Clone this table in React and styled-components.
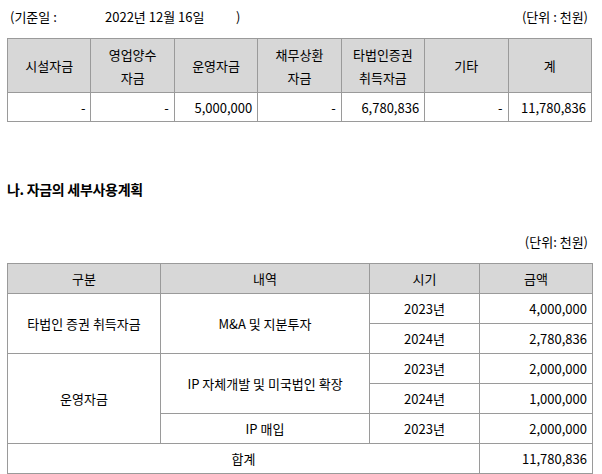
import React from "react"
import styled, { createGlobalStyle } from "styled-components"

const GlobalStyle = createGlobalStyle`
  body {
    margin: 0;
    background: #fff;
    color: #000;
    font-family: "Noto Sans CJK KR", "Noto Sans", sans-serif;
    font-size: 13px;
  }
`

const Page = styled.div`
  width: 585px;
  margin-left: 7px;
  padding-top: 7px;
`

const InfoLine = styled.div`
  display: flex;
  align-items: center;
  height: 20px;
  line-height: 20px;
  margin-bottom: ${props => props.gap || 11}px;
  margin-top: ${props => props.top || 0}px;
`

const InfoPart = styled.span`
  display: inline-block;
  width: ${props => (props.w ? `${props.w}px` : "auto")};
  padding-left: ${props => props.pad || 0}px;
`

const Unit = styled.span`
  margin-left: auto;
  padding-right: 4px;
`

const Title = styled.h2`
  margin: 57px 0 0;
  height: 20px;
  line-height: 20px;
  font-size: 14px;
  font-weight: 700;
  letter-spacing: -0.3px;
`

const Table = styled.table`
  width: 585px;
  border-collapse: collapse;
  table-layout: fixed;
  border: 1.5px solid #333;
`

const Th = styled.th`
  background: #d7d7d7;
  font-weight: 400;
  height: ${props => props.h || 28}px;
  line-height: 23px;
  border: 1px solid #9a9a9a;
  padding: 0;
  text-align: center;
`

const Td = styled.td`
  height: ${props => props.h || 28}px;
  border: 1px solid #9a9a9a;
  padding: 0 ${props => (props.num ? 5 : 0)}px 0 0;
  text-align: ${props => (props.num ? "right" : "center")};
`

const fundCols = ["시설자금", ["영업양수", "자금"], "운영자금", ["채무상환", "자금"], ["타법인증권", "취득자금"], "기타", "계"]
const fundVals = ["-", "-", "5,000,000", "-", "6,780,836", "-", "11,780,836"]

const planRows = [
  { group: "타법인 증권 취득자금", groupSpan: 2, item: "M&A 및 지분투자", itemSpan: 2, year: "2023년", amount: "4,000,000" },
  { year: "2024년", amount: "2,780,836" },
  { group: "운영자금", groupSpan: 3, item: "IP 자체개발 및 미국법인 확장", itemSpan: 2, year: "2023년", amount: "2,000,000" },
  { year: "2024년", amount: "1,000,000" },
  { item: "IP 매입", itemSpan: 1, year: "2023년", amount: "2,000,000" },
]

export default function App() {
  return (
    <Page>
      <GlobalStyle />
      <InfoLine>
        <InfoPart w={95} pad={3}>(기준일 :</InfoPart>
        <InfoPart w={131}>2022년 12월 16일</InfoPart>
        <InfoPart>)</InfoPart>
        <Unit>(단위 : 천원)</Unit>
      </InfoLine>
      <Table>
        <thead>
          <tr>
            {fundCols.map((c, i) => (
              <Th key={i} h={53}>
                {Array.isArray(c) ? (
                  <>
                    {c[0]}
                    <br />
                    {c[1]}
                  </>
                ) : (
                  c
                )}
              </Th>
            ))}
          </tr>
        </thead>
        <tbody>
          <tr>
            {fundVals.map((v, i) => (
              <Td key={i} num>
                {v}
              </Td>
            ))}
          </tr>
        </tbody>
      </Table>

      <Title>나. 자금의 세부사용계획</Title>

      <InfoLine top={33}>
        <Unit>(단위: 천원)</Unit>
      </InfoLine>
      <Table>
        <colgroup>
          <col style={{ width: 153 }} />
          <col style={{ width: 209 }} />
          <col style={{ width: 110 }} />
          <col style={{ width: 113 }} />
        </colgroup>
        <thead>
          <tr>
            <Th h={29}>구분</Th>
            <Th h={29}>내역</Th>
            <Th h={29}>시기</Th>
            <Th h={29}>금액</Th>
          </tr>
        </thead>
        <tbody>
          {planRows.map((r, i) => (
            <tr key={i}>
              {r.group && <Td h={29} rowSpan={r.groupSpan}>{r.group}</Td>}
              {r.item && <Td h={29} rowSpan={r.itemSpan}>{r.item}</Td>}
              <Td h={29}>{r.year}</Td>
              <Td h={29} num>{r.amount}</Td>
            </tr>
          ))}
          <tr>
            <Td h={29} colSpan={3}>합계</Td>
            <Td h={29} num>11,780,836</Td>
          </tr>
        </tbody>
      </Table>
    </Page>
  )
}
